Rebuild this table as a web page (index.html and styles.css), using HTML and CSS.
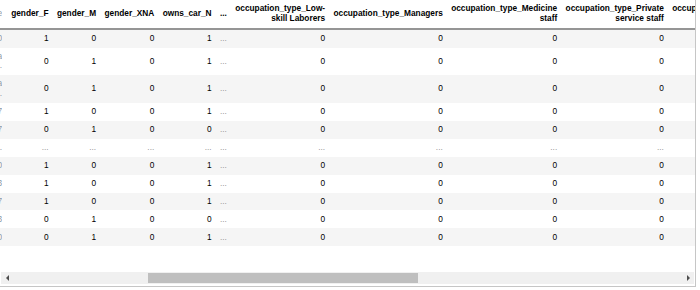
FILE: index.html
```html
<!DOCTYPE html>
<html lang="en">
<head>
    <meta charset="UTF-8">
    <meta name="viewport" content="width=device-width, initial-scale=1.0">
    <title>DataFrame output</title>
    <link rel="stylesheet" href="styles.css">
</head>
<body>
    <div class="output">
        <div class="table-wrap">
            <table class="dataframe">
                <thead>
                    <tr>
                        <th class="idx"><div class="clip"><span>e</span></div></th>
                        <th>gender_F</th>
                        <th>gender_M</th>
                        <th>gender_XNA</th>
                        <th>owns_car_N</th>
                        <th>...</th>
                        <th>occupation_type_Low-<br>skill Laborers</th>
                        <th>occupation_type_Managers</th>
                        <th>occupation_type_Medicine<br>staff</th>
                        <th>occupation_type_Private<br>service staff</th>
                        <th>occupation_type_Realty<br>agents</th>
                    </tr>
                </thead>
                <tbody>
                    <tr>
                        <th class="idx"><div class="clip"><span>0</span></div></th>
                        <td>1</td><td>0</td><td>0</td><td>1</td><td class="more">...</td>
                        <td>0</td><td>0</td><td>0</td><td>0</td><td>0</td>
                    </tr>
                    <tr>
                        <th class="idx"><div class="clip"><span>a<br>.</span></div></th>
                        <td>0</td><td>1</td><td>0</td><td>1</td><td class="more">...</td>
                        <td>0</td><td>0</td><td>0</td><td>0</td><td>0</td>
                    </tr>
                    <tr>
                        <th class="idx"><div class="clip"><span>a<br>.</span></div></th>
                        <td>0</td><td>1</td><td>0</td><td>1</td><td class="more">...</td>
                        <td>0</td><td>0</td><td>0</td><td>0</td><td>0</td>
                    </tr>
                    <tr>
                        <th class="idx"><div class="clip"><span>7</span></div></th>
                        <td>1</td><td>0</td><td>0</td><td>1</td><td class="more">...</td>
                        <td>0</td><td>0</td><td>0</td><td>0</td><td>0</td>
                    </tr>
                    <tr>
                        <th class="idx"><div class="clip"><span>7</span></div></th>
                        <td>0</td><td>1</td><td>0</td><td>0</td><td class="more">...</td>
                        <td>0</td><td>0</td><td>0</td><td>0</td><td>0</td>
                    </tr>
                    <tr>
                        <th class="idx"><div class="clip"><span>..</span></div></th>
                        <td class="more">...</td><td class="more">...</td><td class="more">...</td><td class="more">...</td><td class="more">...</td>
                        <td class="more">...</td><td class="more">...</td><td class="more">...</td><td class="more">...</td><td class="more">...</td>
                    </tr>
                    <tr>
                        <th class="idx"><div class="clip"><span>0</span></div></th>
                        <td>1</td><td>0</td><td>0</td><td>1</td><td class="more">...</td>
                        <td>0</td><td>0</td><td>0</td><td>0</td><td>0</td>
                    </tr>
                    <tr>
                        <th class="idx"><div class="clip"><span>3</span></div></th>
                        <td>1</td><td>0</td><td>0</td><td>1</td><td class="more">...</td>
                        <td>0</td><td>0</td><td>0</td><td>0</td><td>0</td>
                    </tr>
                    <tr>
                        <th class="idx"><div class="clip"><span>7</span></div></th>
                        <td>1</td><td>0</td><td>0</td><td>1</td><td class="more">...</td>
                        <td>0</td><td>0</td><td>0</td><td>0</td><td>0</td>
                    </tr>
                    <tr>
                        <th class="idx"><div class="clip"><span>3</span></div></th>
                        <td>0</td><td>1</td><td>0</td><td>0</td><td class="more">...</td>
                        <td>0</td><td>0</td><td>0</td><td>0</td><td>0</td>
                    </tr>
                    <tr>
                        <th class="idx"><div class="clip"><span>0</span></div></th>
                        <td>0</td><td>1</td><td>0</td><td>1</td><td class="more">...</td>
                        <td>0</td><td>0</td><td>0</td><td>0</td><td>0</td>
                    </tr>
                </tbody>
            </table>
        </div>

        <div class="scrollbar">
            <div class="scroll-btn"><span class="arrow-left"></span></div>
            <div class="scroll-track">
                <div class="scroll-thumb" style="margin-left: 135px; width: 270px;"></div>
            </div>
            <div class="scroll-btn"><span class="arrow-right"></span></div>
        </div>
    </div>
</body>
</html>
```

FILE: styles.css
```css
* {
    margin: 0;
    padding: 0;
    box-sizing: border-box;
}

body {
    background: white;
    font-family: 'Liberation Sans', Arial, sans-serif;
}

.output {
    width: 696px;
    height: 287px;
    border-right: 1px solid #c6c6c6;
    border-bottom: 1px solid #c6c6c6;
    display: flex;
    flex-direction: column;
}

.table-wrap {
    flex: 1;
    min-width: 0;
    overflow: hidden;
}

.dataframe {
    border-collapse: collapse;
    border-spacing: 0;
    font-size: 8.3px;
    line-height: 9.6px;
    color: #000;
}

.dataframe th,
.dataframe td {
    padding: 4.2px;
    text-align: right;
    vertical-align: middle;
    white-space: nowrap;
}

.dataframe thead th {
    font-weight: bold;
    border-bottom: 2px solid #959595;
}

.dataframe tbody td {
    font-weight: normal;
}

.dataframe tbody tr:nth-child(odd) {
    background: #f5f5f5;
}

.dataframe td.more {
    color: #9a9a9a;
}

/* index column, scrolled almost out of view */
.dataframe .idx {
    padding-left: 0;
    padding-right: 5px;
    font-weight: normal;
    color: #8c9aa8;
}

.clip {
    width: 2px;
    overflow: hidden;
    direction: rtl;
}

.clip span {
    display: inline-block;
    direction: ltr;
    unicode-bidi: isolate;
    white-space: nowrap;
}

.scrollbar {
    height: 12px;
    margin: 0 1px 2px 1px;
    display: flex;
    background: #f0f0f0;
}

.scroll-btn {
    width: 12px;
    display: flex;
    align-items: center;
    justify-content: center;
}

.arrow-left {
    border-top: 3.5px solid transparent;
    border-bottom: 3.5px solid transparent;
    border-right: 3.5px solid #4d4d4d;
}

.arrow-right {
    border-top: 3.5px solid transparent;
    border-bottom: 3.5px solid transparent;
    border-left: 3.5px solid #4d4d4d;
}

.scroll-track {
    flex: 1;
    display: flex;
    padding: 1px 0;
}

.scroll-thumb {
    background: #bfbfbf;
}
```
